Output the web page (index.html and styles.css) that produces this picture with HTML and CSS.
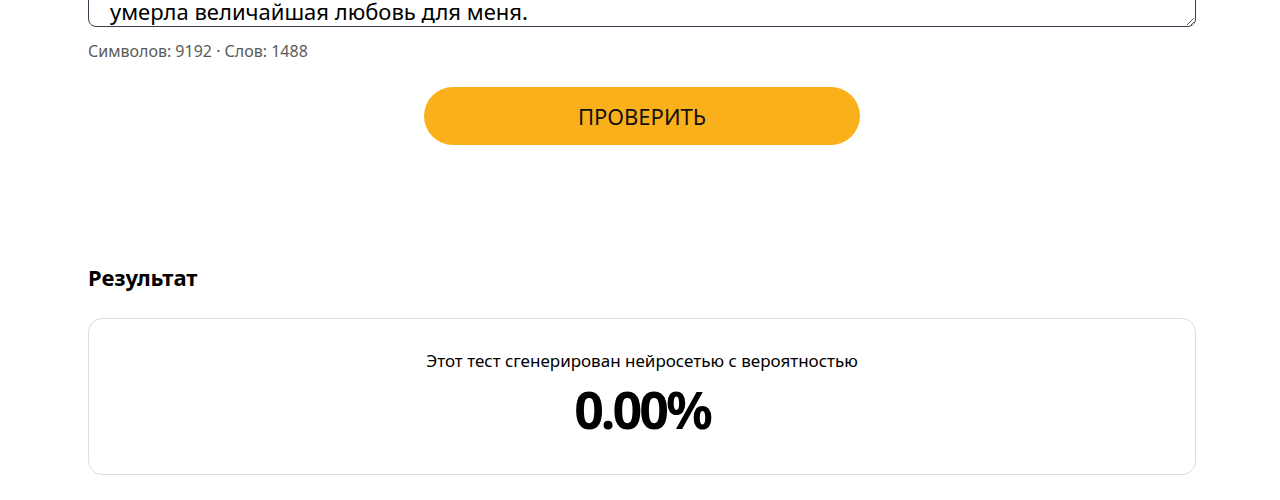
FILE: index.html
```html
<!DOCTYPE html>
<html lang="ru">
<head>
    <meta charset="UTF-8">
    <meta name="viewport" content="width=device-width, initial-scale=1.0">
    <title>Проверка текста</title>
    <link rel="stylesheet" href="styles.css">
</head>
<body>
    <div class="page">
        <form class="checker">
            <textarea class="text-input" id="text" name="text">Он шёл по пустой улице.
Фонари уже погасли.
Где-то далеко лаяла собака.
И в ту ночь во мне
умерла величайшая любовь для меня.</textarea>
            <p class="counter">Символов: 9192 · Слов: 1488</p>
            <div class="actions">
                <button type="submit" class="check-button">ПРОВЕРИТЬ</button>
            </div>
        </form>

        <section class="result">
            <h2 class="result-title">Результат</h2>
            <div class="result-card">
                <p class="result-label">Этот тест сгенерирован нейросетью с вероятностью</p>
                <p class="result-value">0.00%</p>
            </div>
        </section>
    </div>
</body>
</html>
```

FILE: styles.css
```css
body {
    margin: 0;
    padding: 0;
    background-color: #ffffff;
    font-family: "Noto Sans", Arial, sans-serif;
    color: #000000;
    overflow: hidden;
}
.page {
    width: 1108px;
    margin: 0 84px 0 88px;
}
.checker {
    margin: 0;
}
.text-input {
    display: block;
    box-sizing: border-box;
    width: 100%;
    height: 165px;
    margin-top: -138px;
    padding: 22px 20px 0 21px;
    font-family: "Noto Sans", Arial, sans-serif;
    font-size: 22px;
    line-height: 28px;
    color: #000000;
    border: 1.5px solid #3c3c4e;
    border-radius: 8px;
    resize: vertical;
    overflow: hidden;
}
.counter {
    margin: 14px 0 0;
    font-size: 16px;
    line-height: 20px;
    color: #5a5a5a;
}
.actions {
    display: flex;
    justify-content: center;
    margin-top: 26px;
}
.check-button {
    width: 436px;
    height: 58px;
    font-family: "Noto Sans", Arial, sans-serif;
    font-size: 22px;
    color: #111111;
    background-color: #f9b01b;
    border: none;
    border-radius: 29px;
    cursor: pointer;
}
.check-button:hover {
    background-color: #f0a50c;
}
.result {
    margin-top: 117px;
}
.result-title {
    margin: 0 0 26px;
    font-size: 22px;
    line-height: 30px;
    font-weight: 700;
}
.result-card {
    display: flex;
    flex-direction: column;
    align-items: center;
    box-sizing: border-box;
    height: 157px;
    padding-top: 31px;
    border: 1px solid #dcdcdc;
    border-radius: 14px;
}
.result-label {
    margin: 0;
    font-size: 17px;
    line-height: 22px;
}
.result-value {
    margin: 6px 0 0;
    font-size: 52px;
    line-height: 62px;
    font-weight: 700;
    letter-spacing: -3px;
}
```
